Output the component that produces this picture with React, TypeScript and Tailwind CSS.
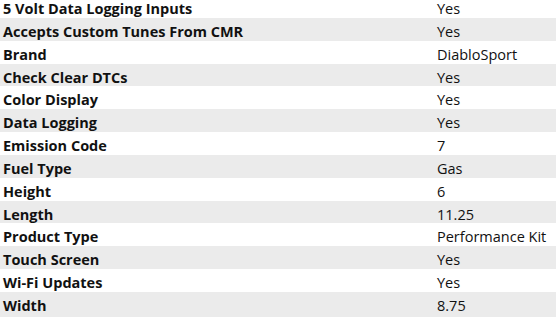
import React from "react";

const rows: [string, string][] = [
  ["5 Volt Data Logging Inputs", "Yes"],
  ["Accepts Custom Tunes From CMR", "Yes"],
  ["Brand", "DiabloSport"],
  ["Check Clear DTCs", "Yes"],
  ["Color Display", "Yes"],
  ["Data Logging", "Yes"],
  ["Emission Code", "7"],
  ["Fuel Type", "Gas"],
  ["Height", "6"],
  ["Length", "11.25"],
  ["Product Type", "Performance Kit"],
  ["Touch Screen", "Yes"],
  ["Wi-Fi Updates", "Yes"],
  ["Width", "8.75"],
];

export default function App() {
  return (
    <div className="w-[556px] h-[317px] overflow-hidden bg-white">
      <div
        className="-mt-[5px] flex flex-col text-[14.5px] leading-[19.75px] text-[#111]"
        style={{ fontFamily: '"Open Sans", sans-serif' }}
      >
        {rows.map(([k, v], i) => (
          <div
            key={k}
            className={`flex pt-[4px] ${i % 2 === 1 ? "bg-[#ebebeb]" : "bg-white"} ${
              i === rows.length - 1 ? "h-[30px]" : "h-[22.85px]"
            }`}
          >
            <div className="w-[434px] pl-[3px] font-bold whitespace-nowrap">{k}</div>
            <div className="flex-1 pl-[3px] whitespace-nowrap">{v}</div>
          </div>
        ))}
      </div>
    </div>
  );
}
